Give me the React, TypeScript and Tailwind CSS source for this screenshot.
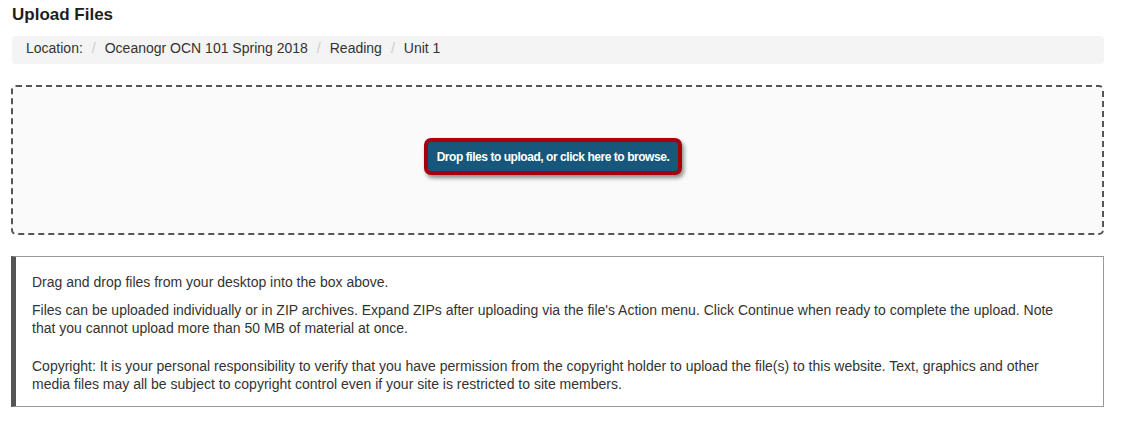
export default function App() {
  return (
    <div className="w-[1124px] h-[426px] bg-white text-[#333] font-['Liberation_Sans',Arial,sans-serif]">
      <div className="pl-[11px] pr-[20px] pt-[5px]">
        <h1 className="text-[17px] leading-[20px] font-bold text-[#1f1f1f] pl-px">Upload Files</h1>
        <div className="mt-[11px] ml-px h-[28px] rounded-[4px] bg-[#f4f4f4] pl-[14px] pt-[3px] flex items-start text-[14px] leading-[18px] text-[#333]">
          <span>Location:</span>
          <span className="px-[9px] text-[#ccc]">/</span>
          <span>Oceanogr OCN 101 Spring 2018</span>
          <span className="px-[9px] text-[#ccc]">/</span>
          <span>Reading</span>
          <span className="px-[9px] text-[#ccc]">/</span>
          <span>Unit 1</span>
        </div>
        <div className="mt-[21px] h-[150px] rounded-[5px] border-2 border-dashed border-[#555] bg-[#fafafa] flex items-center justify-center">
          <div className="mt-[-7px] mr-[9px] rounded-[7px] border-[4px] border-[#a7000d] bg-[#17577b] px-[9px] h-[37px] flex items-center shadow-[2px_3px_4px_rgba(0,0,0,0.45)]">
            <span className="text-white text-[12px] tracking-[-0.45px] font-bold">Drop files to upload, or click here to browse.</span>
          </div>
        </div>
        <div className="mt-[21px] h-[151px] border border-[#999] border-l-[5px] border-l-[#555] pl-[16px] pt-[16px] text-[14px] leading-[18px] text-[#333]">
          <p>Drag and drop files from your desktop into the box above.</p>
          <p className="mt-[10px] pr-[30px]">
            Files can be uploaded individually or in ZIP archives. Expand ZIPs after uploading via the file's Action menu. Click Continue when ready to complete the upload. Note that you cannot upload more than 50 MB of material at once.
          </p>
          <p className="mt-[20px] pr-[30px]">
            Copyright: It is your personal responsibility to verify that you have permission from the copyright holder to upload the file(s) to this website. Text, graphics and other media files may all be subject to copyright control even if your site is restricted to site members.
          </p>
        </div>
      </div>
    </div>
  );
}
